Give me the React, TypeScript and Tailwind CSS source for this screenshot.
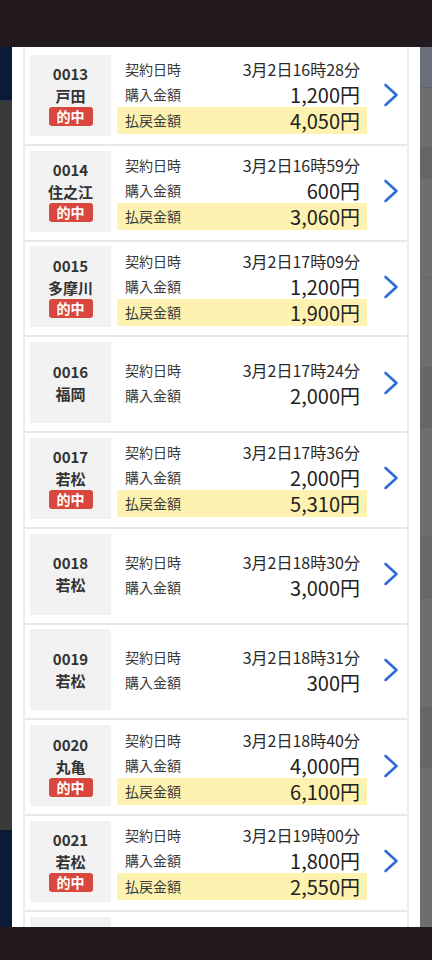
import React from "react";

type Bet = {
  no: string;
  place: string;
  time: string;
  buy: string;
  payout?: string;
};

const bets: Bet[] = [
  { no: "0013", place: "戸田", time: "3月2日16時28分", buy: "1,200円", payout: "4,050円" },
  { no: "0014", place: "住之江", time: "3月2日16時59分", buy: "600円", payout: "3,060円" },
  { no: "0015", place: "多摩川", time: "3月2日17時09分", buy: "1,200円", payout: "1,900円" },
  { no: "0016", place: "福岡", time: "3月2日17時24分", buy: "2,000円" },
  { no: "0017", place: "若松", time: "3月2日17時36分", buy: "2,000円", payout: "5,310円" },
  { no: "0018", place: "若松", time: "3月2日18時30分", buy: "3,000円" },
  { no: "0019", place: "若松", time: "3月2日18時31分", buy: "300円" },
  { no: "0020", place: "丸亀", time: "3月2日18時40分", buy: "4,000円", payout: "6,100円" },
  { no: "0021", place: "若松", time: "3月2日19時00分", buy: "1,800円", payout: "2,550円" },
];

function Chevron() {
  return (
    <svg width="16" height="24" viewBox="0 0 16 24" fill="none">
      <polyline
        points="2.5,2 13.5,12 2.5,22"
        stroke="#2f6ad6"
        strokeWidth="2.6"
        strokeLinecap="round"
        strokeLinejoin="round"
      />
    </svg>
  );
}

function BetRow({ bet }: { bet: Bet }) {
  const hit = !!bet.payout;
  return (
    <div className="flex items-start border-b-2 border-[#e8e8e8] pl-[5px] pt-[4.75px] pb-[8px]">
      <div className="flex h-[81px] w-[81px] shrink-0 flex-col items-center justify-center bg-[#f2f2f2] text-[15px] font-bold text-[#333]">
        <div className="leading-[22px]">{bet.no}</div>
        <div className="leading-[22px]">{bet.place}</div>
        {hit && (
          <div className="mb-[1px] flex h-[19px] w-[44px] items-center justify-center rounded-[3px] bg-[#d8483f] text-[14px] font-semibold leading-[19px] text-white">
            的中
          </div>
        )}
      </div>
      <div className="ml-[6px] flex h-[81px] w-[250px] flex-col justify-center">
        <div className="flex h-[26px] items-center justify-between pl-[8px] pr-[7px]">
          <span className="text-[14px] leading-[26px] text-[#3a3a3a]">契約日時</span>
          <span className="text-[16px] leading-[26px] text-[#2a2a2a]">{bet.time}</span>
        </div>
        <div className="flex h-[25px] items-center justify-between pl-[8px] pr-[7px]">
          <span className="text-[14px] leading-[25px] text-[#3a3a3a]">購入金額</span>
          <span className="text-[20px] leading-[25px] text-[#222]">{bet.buy}</span>
        </div>
        {hit && (
          <div className="flex h-[27px] items-center justify-between bg-[#fdf2b0] pl-[8px] pr-[7px]">
            <span className="text-[14px] leading-[27px] text-[#3a3a3a]">払戻金額</span>
            <span className="text-[20px] leading-[27px] text-[#222]">{bet.payout}</span>
          </div>
        )}
      </div>
      <div className="flex h-[81px] flex-1 items-center pl-[16px]">
        <Chevron />
      </div>
    </div>
  );
}

export default function App() {
  return (
    <div
      className="flex h-[960px] w-[432px] flex-col overflow-hidden bg-[#231a20]"
      style={{ fontFamily: '"Noto Sans CJK JP", "Noto Sans", sans-serif' }}
    >
      <div className="h-[47px] shrink-0 bg-[#231a20]" />
      <div className="flex h-[880px] shrink-0 overflow-hidden">
        <div className="flex w-[12px] shrink-0 flex-col">
          <div className="h-[53px] bg-[#0a1a37]" />
          <div className="flex-1 border-t border-[#2a3550] bg-[#3a3a3a]" />
          <div className="h-[97px] bg-[#0a1a37]" />
        </div>
        <div className="w-[408px] shrink-0 overflow-hidden bg-white px-[11px]">
          <div className="border-x-2 border-[#ececec] pt-[3px]">
            {bets.map((bet) => (
              <BetRow key={bet.no} bet={bet} />
            ))}
            <div className="pl-[5px] pt-[4.75px]">
              <div className="h-[81px] w-[81px] bg-[#f2f2f2]" />
            </div>
          </div>
        </div>
        <div className="flex w-[12px] shrink-0 flex-col bg-[#6e6e6e]">
          <div className="h-[40px] bg-[#6a6f7a]" />
          <div className="h-[60px] border-t border-[#646464]" />
          <div className="h-[30px] border-t border-[#646464] bg-[#666]" />
          <div className="h-[100px] border-t border-[#646464]" />
          <div className="h-[90px] border-t border-[#646464]" />
          <div className="h-[60px] border-t border-[#646464] bg-[#676767]" />
          <div className="h-[110px] border-t border-[#646464]" />
          <div className="h-[60px] border-t border-[#646464] bg-[#686868]" />
          <div className="h-[110px] border-t border-[#646464]" />
          <div className="h-[60px] border-t border-[#646464] bg-[#676767]" />
          <div className="flex-1 border-t border-[#646464]" />
        </div>
      </div>
      <div className="flex-1 bg-[#231a20]" />
    </div>
  );
}
